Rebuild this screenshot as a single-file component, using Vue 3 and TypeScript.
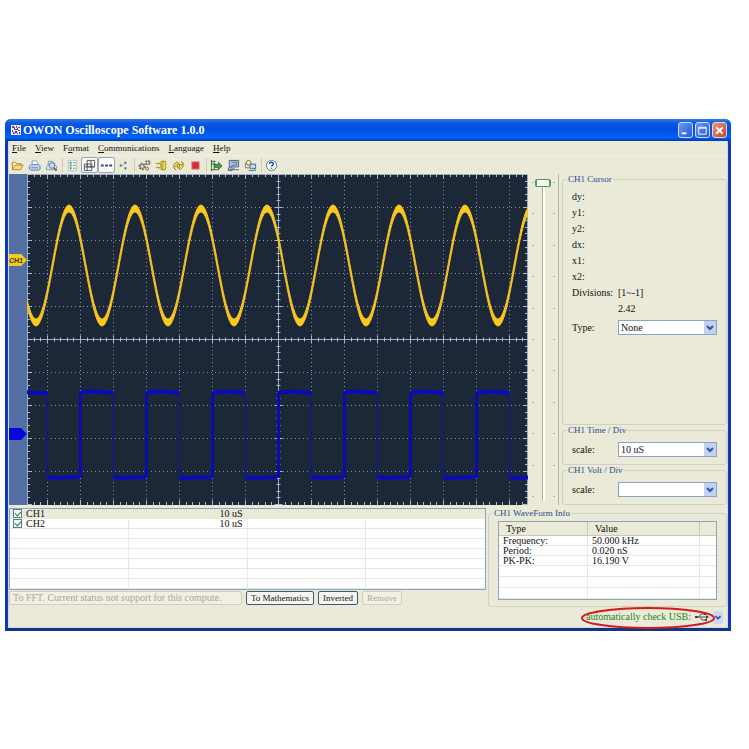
<script setup lang="ts">
import { computed, ref } from 'vue'

interface Channel { name: string; scale: string; shown: boolean }

const menus = ['File', 'View', 'Format', 'Communications', 'Language', 'Help']
const menuKeys: Record<string, number> = { File: 0, View: 0, Format: 1, Communications: 0, Language: 0, Help: 0 }

const tools: { name: string; icon: string; pressed?: boolean }[][] = [
  [{ name: 'Open', icon: 'open' }, { name: 'Print', icon: 'print' }, { name: 'Preview', icon: 'preview' }],
  [
    { name: 'List', icon: 'list' },
    { name: 'Grid', icon: 'grid', pressed: true },
    { name: 'Dotted line', icon: 'dots', pressed: true },
    { name: 'Points', icon: 'points' },
  ],
  [
    { name: 'Settings', icon: 'gears' },
    { name: 'Connect', icon: 'plug' },
    { name: 'Refresh', icon: 'refresh' },
    { name: 'Stop', icon: 'stop' },
  ],
  [{ name: 'Export', icon: 'export' }, { name: 'Network', icon: 'network' }, { name: 'Capture', icon: 'capture' }],
  [{ name: 'Help', icon: 'help' }],
]

const channels = ref<Channel[]>([
  { name: 'CH1', scale: '10 uS', shown: true },
  { name: 'CH2', scale: '10 uS', shown: true },
])
const cursorFields = ['dy:', 'y1:', 'y2:', 'dx:', 'x1:', 'x2:']
const info = [
  ['Frequency:', '50.000 kHz'],
  ['Period:', '0.020 nS'],
  ['PK-PK:', '16.190 V'],
]
const cursorType = ref('None')
const timeScale = ref('10 uS')
const voltScale = ref('')
const position = ref(0)

const W = 501
const H = 331
const CX = 251
const CY = 165
const DIV = 33

const gridX = Array.from({ length: 15 }, (_, i) => CX + (i - 7) * DIV).filter((x) => x !== CX && x < W)
const gridY = Array.from({ length: 9 }, (_, i) => CY + (i - 4) * DIV).filter((y) => y !== CY)

// Minor ticks: five per division, the division tick itself is longer.
const ticks = computed(() => {
  let d = ''
  for (let i = -38; i <= 38; i++) {
    const x = Math.round(CX + (i * DIV) / 5) + 0.5
    if (x < 0 || x > W) continue
    const l = i % 5 === 0 ? 4 : 2
    d += `M${x} 0V${l + 1}M${x} ${CY + 0.5 - l}v${l * 2}M${x} ${H}v${-l - 1}`
  }
  for (let i = -25; i <= 25; i++) {
    const y = Math.round(CY + (i * DIV) / 5) + 0.5
    if (y < 0 || y > H) continue
    const l = i % 5 === 0 ? 4 : 2
    d += `M0 ${y}H${l + 1}M${CX + 0.5 - l} ${y}h${l * 2}M${W} ${y}h${-l - 1}`
  }
  return d
})

// The sine trace is a band of constant vertical thickness.
const sine = computed(() => {
  const y = (x: number) => 91.5 - 57 * Math.cos(((x - 42) * 2 * Math.PI) / 66)
  const top: string[] = []
  const bottom: string[] = []
  for (let x = 0; x <= W; x++) {
    top.push(`${x} ${(y(x) - 3.5).toFixed(1)}`)
    bottom.unshift(`${x} ${(y(x) + 3.5).toFixed(1)}`)
  }
  return `M${top.concat(bottom).join('L')}Z`
})

const levels = computed(() => {
  let d = 'M0 218L5 219H20'
  for (let x = 20; x < W; x += 66) {
    d += `M${x} 303l8 1l24-1`
    if (x + 33 < W) d += `M${x + 33} 219l10-1.500l14 0.500l9 1`
  }
  return d
})
const rises = Array.from({ length: 7 }, (_, i) => `M${53.5 + i * 66} 218V304`).join('')
const falls = Array.from({ length: 8 }, (_, i) => `M${20.5 + i * 66} 218V304`).join('')
</script>

<template>
  <div class="page">
    <main class="window">
      <header class="titlebar">
        <svg class="logo" viewBox="0 0 10 10" aria-hidden="true">
          <rect width="10" height="10" fill="#e8eefb" />
          <path d="M1 1h2v2H1zM5 1h1v2H5zM7 2h2v1H7zM1 5h1v2H1zM3 4h3v1H3zM7 5h2v1H7zM2 8h2v1H2zM6 8h1v1H6z" fill="#c0304c" />
          <path d="M3 2h1v2H3zM6 3h1v2H6zM4 6h2v2H4zM8 7h1v2H8zM2 7h1v1H2z" fill="#26408c" />
        </svg>
        <h1>OWON Oscilloscope Software 1.0.0</h1>
        <button class="caption" aria-label="Minimize"><svg viewBox="0 0 14 14"><path d="M3 10h5" stroke="#fff" stroke-width="2" /></svg></button>
        <button class="caption" aria-label="Maximize"><svg viewBox="0 0 14 14"><path d="M3 3.500h8v7.500h-8zM3 4.500h8" fill="none" stroke="#fff" /></svg></button>
        <button class="caption close" aria-label="Close"><svg viewBox="0 0 14 14"><path d="M3.500 3.500l7 7M10.500 3.500l-7 7" stroke="#fff" stroke-width="2" /></svg></button>
      </header>

      <nav class="menubar">
        <button v-for="m in menus" :key="m">{{ m.slice(0, menuKeys[m]) }}<u>{{ m[menuKeys[m]] }}</u>{{ m.slice(menuKeys[m] + 1) }}</button>
      </nav>

      <div class="toolbar">
        <div v-for="(group, g) in tools" :key="g" class="group">
          <button v-for="t in group" :key="t.name" :aria-label="t.name" :class="{ pressed: t.pressed }">
            <svg viewBox="0 0 14 14" fill="none">
              <template v-if="t.icon === 'open'">
                <path d="M1.500 11.500v-8h3.500l1 1.500h4.500v2" fill="#fdf0c0" stroke="#b88420" />
                <path d="M1.500 11.500l3-5h8.500l-2.500 5z" fill="#fbdc80" stroke="#b88420" />
              </template>
              <template v-else-if="t.icon === 'print'">
                <path d="M4.500 6V2h4l2 2v2" fill="#fff" stroke="#7c98c4" />
                <path d="M1.500 11V7.500l2-1.500h8l1.500 1.500V11l-1.500 1h-8z" fill="#c4d6ee" stroke="#5e80b4" />
                <path d="M3.500 9.500h7" stroke="#5e80b4" />
              </template>
              <template v-else-if="t.icon === 'preview'">
                <path d="M3.500 7V2.500h5l2 2V7M1.500 11.500V8l1.500-1.500h8l1.500 1.500v3.500z" fill="#dbe5f2" stroke="#8098b4" />
                <circle cx="7.500" cy="7" r="3" fill="#c8dcf0" stroke="#5c7898" />
                <path d="M9.500 9.500l3 3" stroke="#5c6c80" stroke-width="2" />
              </template>
              <template v-else-if="t.icon === 'list'">
                <path d="M2.500 1.500h9v11h-9z" fill="#f4f8f0" stroke="#b4c4c8" />
                <path d="M4 4h2M4 7h2M4 10h2" stroke="#3c9c58" stroke-width="2" />
                <path d="M7.500 4h3M7.500 7h3M7.500 10h3" stroke="#7894b0" />
              </template>
              <template v-else-if="t.icon === 'grid'">
                <path d="M4.500 1.500h8v7h-8zM1.500 5.500h8v7h-8zM4.500 5v7M8.500 2v7M1.500 8.500h11" stroke="#4c545c" />
              </template>
              <template v-else-if="t.icon === 'dots'">
                <path d="M1 7h3M5.500 7h3M10 7h3" stroke="#2c4884" stroke-width="2" />
              </template>
              <template v-else-if="t.icon === 'points'">
                <path d="M3 6h2v2H3zM8 3h2v2H8zM8 9h2v2H8zM6 6h1v1H6z" fill="#3c6478" />
              </template>
              <template v-else-if="t.icon === 'gears'">
                <circle cx="4.500" cy="8" r="3" stroke="#6c6c60" stroke-width="2" stroke-dasharray="2 1" />
                <circle cx="4.500" cy="8" r="2" fill="#eceadb" stroke="#6c6c60" />
                <circle cx="10.500" cy="4" r="2" stroke="#6c6c60" stroke-width="2" stroke-dasharray="2 1" />
                <circle cx="10" cy="10.500" r="1.500" stroke="#6c6c60" />
              </template>
              <template v-else-if="t.icon === 'plug'">
                <path d="M6.500 2.500h5v9h-5zM8.500 2v10" fill="#f4e468" stroke="#a48c18" />
                <path d="M1 5h4M1 9h4M4 3.500L7 7l-3 3.500" stroke="#a48c18" />
              </template>
              <template v-else-if="t.icon === 'refresh'">
                <path d="M2 8.500V6l3-3 3 2.500H6V8zM12 5.500V8l-3 3.500L6 9h2V6z" fill="#f0d848" stroke="#a48418" />
                <path d="M10 2.500l2.500 3M1.500 9l3 3" stroke="#806c1c" />
              </template>
              <template v-else-if="t.icon === 'stop'">
                <path d="M3 3h8v8H3z" fill="#d42c34" stroke="#e89088" />
              </template>
              <template v-else-if="t.icon === 'export'">
                <path d="M1.500 1v12M4.500 2v10M1 2.500h5M1 5.500h5M1 11.500h8" stroke="#386840" />
                <path d="M5 6h4V3.500l4 4-4 4V9H5z" fill="#48a850" stroke="#286c34" />
              </template>
              <template v-else-if="t.icon === 'network'">
                <path d="M2.500 1.500h10v7h-10z" fill="#b8cce4" stroke="#4c5c70" />
                <path d="M4.500 3.500h6v3h-6M7.500 9v2M2 11.500h11M1.500 9.500h4v3h-4z" stroke="#4c6c94" />
              </template>
              <template v-else-if="t.icon === 'capture'">
                <path d="M1.500 4.500h6v5h-6z" fill="#e8e0b8" stroke="#8c8048" />
                <circle cx="5" cy="4" r="2.500" fill="#f4ecc8" stroke="#786c4c" />
                <path d="M6.500 5.500h6v5h-6zM5 12.500h6M11 10l1.500 3" fill="#c4d8ec" stroke="#446c98" />
              </template>
              <template v-else>
                <circle cx="7" cy="7" r="5.500" fill="#f8fcff" stroke="#4880a4" />
                <path d="M5 5.500c0-3 4-2.500 4 0 0 1.500-2 1-2 2.500M7 9.500v1" stroke="#1c4c84" stroke-width="1.500" />
              </template>
            </svg>
          </button>
        </div>
      </div>

      <section class="workspace">
        <div class="scope">
          <div class="gutter">
            <svg viewBox="0 0 18 331">
              <path d="M0 80h12l6 6-6 6H0z" fill="#f4cc1c" />
              <path d="M0 254h12l6 6-6 6H0z" fill="#0808d8" />
              <text x="0" y="89">CH1</text>
            </svg>
          </div>
          <svg class="screen" :viewBox="`0 0 ${W} ${H}`">
            <rect :width="W" :height="H" fill="#1c2838" />
            <g class="dotted">
              <path v-for="x in gridX" :key="x" :d="`M${x + 0.5} 0V${H}`" />
              <path v-for="y in gridY" :key="y" :d="`M0 ${y + 0.5}H${W}`" />
            </g>
            <path class="axis" :d="`M0 ${CY + 0.5}H${W}M${CX + 0.5} 0V${H}M0.500 0V${H}M${W - 0.5} 0V${H}M0 0.500H${W}`" />
            <path class="ticks" :d="ticks" />
            <path :d="levels" fill="none" stroke="#0a0aba" stroke-width="4" />
            <path :d="rises" stroke="#0b0bb0" stroke-width="3" />
            <path :d="falls" stroke="#1010b4" stroke-width="1" />
            <path :d="sine" fill="#fcc81c" stroke="#f0c028" stroke-width="1" />
          </svg>
        </div>

        <div class="slider">
          <div class="marks"><i v-for="n in 11" :key="n"></i></div>
          <input v-model.number="position" type="range" min="0" max="100" aria-label="Position" />
        </div>

        <div class="settings">
          <fieldset class="cursor">
            <legend>CH1 Cursor</legend>
            <p v-for="f in cursorFields" :key="f">{{ f }}</p>
            <p class="pair"><span>Divisions:</span><span>[1~-1]</span></p>
            <p class="pair"><span></span><span>2.42</span></p>
            <div class="field">
              <label for="type">Type:</label>
              <div class="combo">
                <select id="type" v-model="cursorType"><option>None</option></select>
                <svg viewBox="0 0 12 13"><path d="M3 5l3 3 3-3" /></svg>
              </div>
            </div>
          </fieldset>
          <fieldset>
            <legend>CH1 Time / Div</legend>
            <div class="field">
              <label for="time">scale:</label>
              <div class="combo">
                <select id="time" v-model="timeScale"><option>10 uS</option></select>
                <svg viewBox="0 0 12 13"><path d="M3 5l3 3 3-3" /></svg>
              </div>
            </div>
          </fieldset>
          <fieldset>
            <legend>CH1 Volt / Div</legend>
            <div class="field">
              <label for="volt">scale:</label>
              <div class="combo">
                <select id="volt" v-model="voltScale"><option value=""></option></select>
                <svg viewBox="0 0 12 13"><path d="M3 5l3 3 3-3" /></svg>
              </div>
            </div>
          </fieldset>
        </div>
      </section>

      <section class="lower">
        <div class="channels">
          <table>
            <tbody>
              <tr v-for="(c, i) in channels" :key="c.name" :class="{ selected: i === 0 }">
                <td><label><input v-model="c.shown" type="checkbox" />{{ c.name }}</label></td>
                <td class="num">{{ c.scale }}</td>
                <td></td>
                <td></td>
              </tr>
              <tr v-for="n in 6" :key="n"><td></td><td></td><td></td><td></td></tr>
            </tbody>
          </table>
          <div class="actions">
            <button class="fft" disabled>To FFT. Current status not support for this compute.</button>
            <button>To Mathematics</button>
            <button>Inverted</button>
            <button disabled>Remove</button>
          </div>
        </div>
        <fieldset class="info">
          <legend>CH1 WaveForm Info</legend>
          <table>
            <thead><tr><th>Type</th><th>Value</th><th class="rest"></th></tr></thead>
            <tbody>
              <tr v-for="r in info" :key="r[0]"><td>{{ r[0] }}</td><td>{{ r[1] }}</td><td></td></tr>
              <tr v-for="n in 3" :key="n" class="blank"><td></td><td></td><td></td></tr>
            </tbody>
          </table>
        </fieldset>
      </section>

      <footer class="status">
        <span>automatically check USB:</span>
        <svg class="usb" viewBox="0 0 14 10" fill="none" stroke="#555">
          <path d="M1 5h11M4 5l2-3h3M5 5l2 3h3" />
          <path d="M0 4h3v2H0zM9 1h2v2H9zM10 7h2v2h-2zM11 3l3 2-3 2z" fill="#444" stroke="none" />
        </svg>
        <button aria-label="USB options"><svg viewBox="0 0 12 13"><path d="M3 5l3 3 3-3" /></svg></button>
        <svg class="mark" viewBox="0 0 136 24"><ellipse cx="68" cy="12" rx="66" ry="10" /></svg>
      </footer>
    </main>
  </div>
</template>

<style>
body {
  background: #fff;
}
</style>

<style scoped>
.page {
  padding: 119px 18px 0 5px;
  font: 10px/12px "Liberation Serif", serif;
  color: #111;
}
.page * {
  box-sizing: border-box;
}
button,
select,
input {
  font: inherit;
  color: inherit;
  margin: 0;
}
.window {
  padding: 0 1px 1px;
  border: solid;
  border-width: 0 3px 3px;
  border-color: #0c3fb8 #1238b4 #143484;
  border-radius: 6px 6px 0 0;
  background: #ebe9d8;
  box-shadow: inset 1px -1px #c8d8f4, inset -1px 0 #c8d8f4;
}
.titlebar {
  display: flex;
  align-items: center;
  gap: 2px;
  height: 22px;
  margin: 0 -4px;
  padding: 0 4px 0 6px;
  border-radius: 6px 6px 0 0;
  background: linear-gradient(#3a7cdc, #0a5ae4 18%, #0050e0 45%, #0062f8 85%, #0038a8);
}
.logo {
  width: 10px;
  height: 10px;
}
h1 {
  flex: 1;
  margin: 0;
  font-size: 12px;
  line-height: 14px;
  font-weight: bold;
  color: #fff;
}
.caption {
  width: 15px;
  height: 16px;
  padding: 0;
  border: 1px solid #c8dcfc;
  border-radius: 3px;
  background: linear-gradient(135deg, #6c98f4, #2458d8);
}
.caption.close {
  background: linear-gradient(135deg, #f09078, #d04420);
}
.caption svg,
.toolbar svg {
  display: block;
  width: 100%;
}
.menubar {
  display: flex;
  gap: 9px;
  height: 14px;
  padding: 0 3px;
  font-size: 9px;
}
.menubar button {
  padding: 0;
  border: 0;
  background: none;
}
.toolbar {
  display: flex;
  height: 19px;
  border-top: 1px solid #f2f0e4;
}
.group {
  display: flex;
  align-items: center;
}
.group + .group::before {
  content: "";
  height: 14px;
  margin: 0 1px 0 2px;
  border-left: 1px solid #cfccba;
}
.group button {
  width: 17px;
  height: 16px;
  padding: 0 1px;
  border: 1px solid transparent;
  background: none;
}
.group .pressed {
  border-color: #98a4b4;
  border-radius: 2px;
  background: #fafaf6;
}
.workspace {
  display: grid;
  grid-template-columns: minmax(0, 1fr) 31px 168px;
  align-items: start;
}
.scope {
  display: grid;
  grid-template-columns: 18fr 501fr;
  align-items: start;
}
.slider,
.settings {
  align-self: stretch;
}
.gutter {
  background: #536fa4;
}
.gutter svg,
.screen {
  display: block;
  width: 100%;
}
.gutter text {
  font: italic bold 7px "Liberation Sans", sans-serif;
  fill: #4c3800;
}
.dotted path {
  stroke: #8496a8;
  stroke-dasharray: 1 3;
}
.axis {
  stroke: #98aec0;
}
.ticks {
  stroke: #a8bccc;
}
.slider {
  display: grid;
  border-right: 1px solid #b8b6a4;
}
.marks,
.slider input {
  grid-area: 1 / 1;
}
.marks {
  display: flex;
  flex-direction: column;
  justify-content: space-between;
  padding: 8px 3px 8px 4px;
}
.marks i {
  height: 1px;
  border: solid #b4b2a0;
  border-width: 0 2px;
}
.slider input {
  writing-mode: vertical-lr;
  appearance: none;
  justify-self: center;
  width: 16px;
  height: calc(100% - 9px);
  margin-top: 5px;
  background: none;
}
.slider input::-webkit-slider-runnable-track {
  background: linear-gradient(90deg, transparent 7px, #b0aea0 7px 8px, #fff 8px 10px, transparent 10px);
}
.slider input::-webkit-slider-thumb {
  appearance: none;
  width: 16px;
  height: 8px;
  border: solid #48a058;
  border-width: 1px 2px;
  border-radius: 2px;
  background: #f8f8f4;
}
.settings {
  display: flex;
  flex-direction: column;
  padding-left: 3px;
}
fieldset {
  min-width: 0;
  margin: 0;
  padding: 7px 9px 7px;
  border: 1px solid #d2d0be;
  border-radius: 3px;
}
legend {
  margin-left: -5px;
  padding: 0 1px;
  font-size: 9px;
  line-height: 10px;
  color: #24508c;
}
.settings fieldset + fieldset {
  height: 40px;
}
.settings .cursor {
  flex: 1;
  padding-top: 7px;
}
.cursor p {
  margin: 0 0 4px;
}
.pair,
.field {
  display: grid;
  grid-template-columns: 46px minmax(0, 1fr);
  align-items: center;
  min-height: 12px;
}
.cursor .field {
  margin-top: 5px;
}
.combo {
  display: grid;
}
.combo select,
.combo svg {
  grid-area: 1 / 1;
}
.combo select {
  appearance: none;
  height: 15px;
  padding: 0 2px;
  border: 1px solid #8ca4bc;
  border-radius: 0;
  background: #fff;
  line-height: 12px;
}
.combo svg {
  align-self: center;
  justify-self: end;
  width: 12px;
  height: 13px;
  margin-right: 1px;
  background: #c2d2f6;
  pointer-events: none;
}
.combo path,
.status button path {
  fill: none;
  stroke: #34588c;
  stroke-width: 2;
}
.lower {
  display: grid;
  grid-template-columns: minmax(0, 1fr) 239px;
  gap: 2px;
  padding-top: 3px;
}
table {
  width: 100%;
  border-collapse: separate;
  border-spacing: 0;
  table-layout: fixed;
  background: #fff;
}
td,
th {
  padding: 0;
  font-weight: normal;
  text-align: left;
  white-space: nowrap;
}
.channels table {
  border: 1px solid #8ca4bc;
}
.channels td {
  height: 10px;
  line-height: 9px;
  border: solid #e6e8e4;
  border-width: 0 1px 1px 0;
}
.channels td:last-child {
  border-right: 0;
}
.channels .selected td {
  border-color: #ebe9d8;
  background: #ebe9d8;
}
.channels .num {
  padding-right: 4px;
  text-align: right;
}
.channels label {
  display: flex;
  align-items: center;
  gap: 4px;
  padding-left: 3px;
}
.channels input {
  appearance: none;
  display: grid;
  justify-content: center;
  width: 9px;
  height: 9px;
  border: 1px solid #4c80a0;
  background: #f4faf4;
}
.channels input:checked::before {
  content: "";
  width: 5px;
  height: 3px;
  margin-top: 1px;
  border: solid #28883c;
  border-width: 0 0 1px 1px;
  transform: rotate(-45deg);
}
.actions {
  display: flex;
  gap: 4px;
  padding-top: 1px;
}
.actions button {
  height: 14px;
  padding: 0 4px;
  border: 1px solid #3c5878;
  border-radius: 2px;
  background: #f6f6f0;
  font-size: 9px;
  line-height: 12px;
  white-space: nowrap;
}
.actions button:disabled {
  border-color: #d0cebc;
  background: #f0efe2;
  color: #aaa896;
}
.actions .fft {
  width: 233px;
  padding: 0 3px;
  font-size: 10px;
  text-align: left;
}
.info {
  padding: 3px 9px 6px;
}
.info table {
  border: 1px solid #8ca4bc;
}
.info th {
  height: 14px;
  padding-left: 7px;
  border: solid #cbc8b4;
  border-width: 0 1px 1px 0;
  background: #ebe9d8;
  line-height: 12px;
}
.info .rest {
  width: 16px;
  border-right: 0;
}
.info th:first-child {
  width: 41%;
}
.info td {
  height: 10px;
  padding-left: 4px;
  border: solid #e6e8e4;
  border-width: 0 1px 1px 0;
  line-height: 9px;
}
.info .blank td {
  height: 11px;
}
.info td:last-child {
  border-right: 0;
}
.status {
  position: relative;
  display: flex;
  align-items: center;
  justify-content: flex-end;
  gap: 4px;
  height: 20px;
  padding-right: 4px;
  color: #1c8420;
}
.usb {
  width: 14px;
  height: 10px;
}
.status button {
  width: 10px;
  height: 13px;
  padding: 0;
  border: 0;
  border-radius: 2px;
  background: #c8d8f8;
}
.status button svg {
  display: block;
}
.mark {
  position: absolute;
  right: 11px;
  top: -1px;
  width: 136px;
  height: 24px;
  pointer-events: none;
}
.mark ellipse {
  fill: none;
  stroke: #d01c1c;
  stroke-width: 2;
}
</style>
